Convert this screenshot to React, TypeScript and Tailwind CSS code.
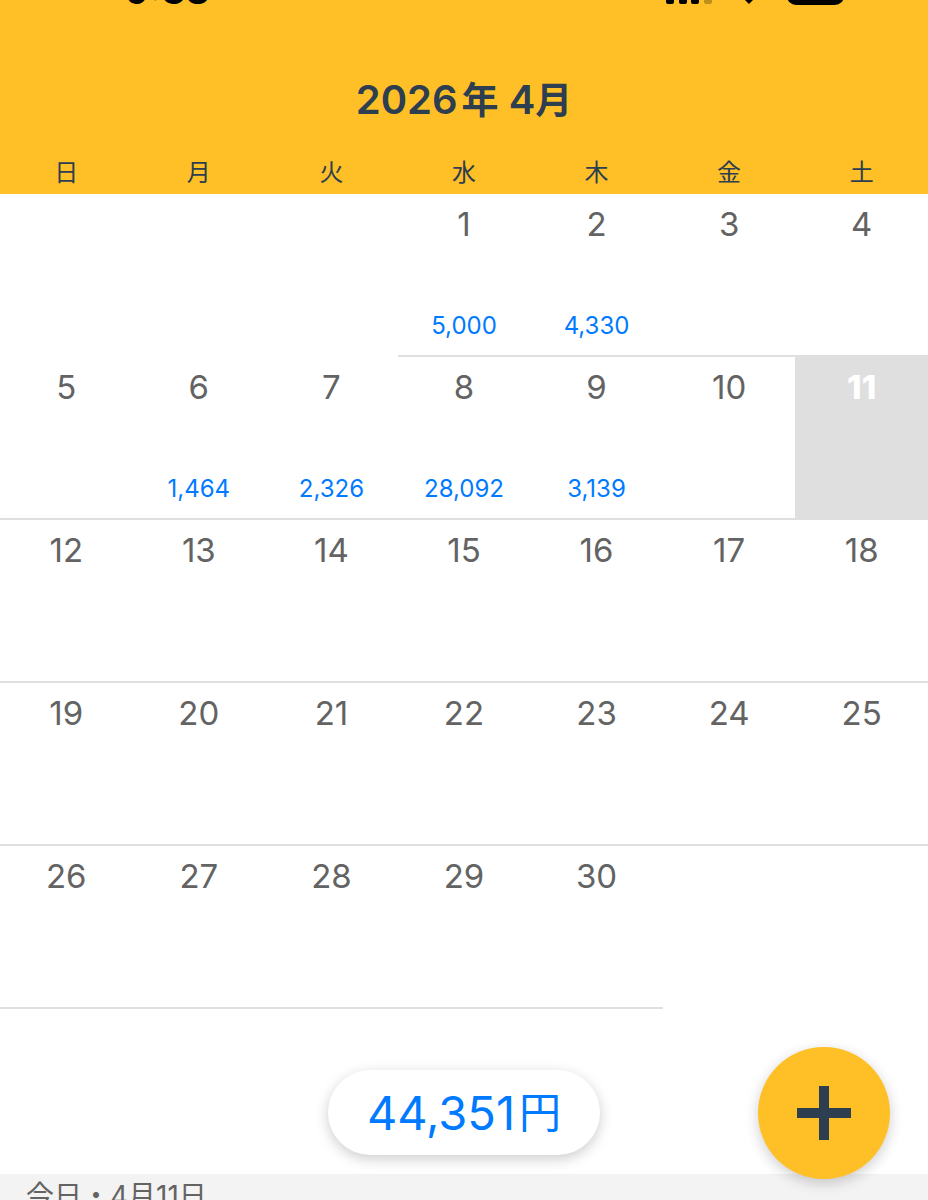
import clsx from 'clsx';

interface Day {
  day: number;
  amount?: string;
}

const TODAY = 11;
const DAYS_IN_MONTH = 30;
const FIRST_WEEKDAY = 3;

const weekdays = ['日', '月', '火', '水', '木', '金', '土'];

const amounts: Record<number, string> = {
  1: '5,000',
  2: '4,330',
  6: '1,464',
  7: '2,326',
  8: '28,092',
  9: '3,139',
};

const weeks: (Day | null)[][] = [0, 1, 2, 3, 4].map((week) =>
  weekdays.map((_, i) => {
    const day = week * 7 + i - FIRST_WEEKDAY + 1;
    return day >= 1 && day <= DAYS_IN_MONTH ? { day, amount: amounts[day] } : null;
  })
);

const StatusBar = () => {
  return (
    <div className="flex h-[6px] items-end justify-between overflow-hidden pl-[125px] pr-[80px] text-black">
      <span className="text-[38px] leading-[32px] font-semibold">9:38</span>
      <svg width="182" height="30" viewBox="0 0 182 30" className="shrink-0">
        <rect x="0" y="19" width="8" height="9" rx="2" />
        <rect x="13" y="14" width="8" height="14" rx="2" />
        <rect x="25" y="9" width="8" height="19" rx="2" />
        <rect x="38" y="3" width="8" height="25" rx="2" opacity="0.25" />
        <path d="M83 28l-6-6q6-5 12 0z" />
        <path d="M66 11q17-15 34 0l-4 4q-13-11-26 0z" />
        <rect x="121" y="1" width="57" height="28" rx="9" />
      </svg>
    </div>
  );
};

const DayCell = ({ data }: { data: Day | null }) => {
  if (!data) return <td></td>;

  const isToday = data.day === TODAY;
  return (
    <td
      className={clsx(
        'border-b-2 border-[#dfdfdf] p-0 align-top',
        isToday && 'bg-[#dfdfdf]'
      )}
    >
      <div className="flex h-[161px] flex-col items-center justify-between pt-[10px] pb-[13px]">
        <span
          className={clsx(
            'text-[33px] leading-[40px]',
            isToday ? 'font-extrabold text-white' : 'text-[#636363]'
          )}
        >
          {data.day}
        </span>
        {data.amount && (
          <span className="text-[24px] leading-[32px] text-[#007aff]">{data.amount}</span>
        )}
      </div>
    </td>
  );
};

const Calendar = () => {
  return (
    <table className="w-full table-fixed border-separate border-spacing-0 text-center">
      <thead className="bg-[#ffbf26] text-[#2c3e50]">
        <tr>
          {weekdays.map((name) => (
            <th key={name} scope="col" className="p-0 pt-[1px] pb-[3px] text-[24px] leading-[36px] font-normal">
              {name}
            </th>
          ))}
        </tr>
      </thead>
      <tbody>
        {weeks.map((week, i) => (
          <tr key={i}>
            {week.map((data, j) => (
              <DayCell key={j} data={data} />
            ))}
          </tr>
        ))}
      </tbody>
    </table>
  );
};

export default function App() {
  return (
    <div
      lang="ja"
      className="flex h-screen flex-col overflow-hidden bg-white font-['Inter','Noto_Sans_CJK_JP',sans-serif]"
    >
      <header className="shrink-0 bg-[#ffbf26] text-[#2c3e50]">
        <StatusBar />
        <h1 className="pt-[68px] pb-[27px] text-center text-[40px] leading-[52px] font-semibold">
          2026<span className="ml-1 text-[37px]">年</span> 4<span className="text-[37px]">月</span>
        </h1>
      </header>

      <main className="shrink-0">
        <Calendar />
        <div className="relative flex justify-center pt-[61px] pb-[19px]">
          <output className="flex h-[85px] items-center rounded-full bg-white px-[39px] text-[47px] leading-[56px] text-[#007aff] shadow-[0_4px_14px_rgba(0,0,0,0.2)]">
            44,351<span className="ml-1 text-[42px]">円</span>
          </output>
          <button
            type="button"
            aria-label="追加"
            className="absolute right-[38px] bottom-[-5px] flex size-[132px] items-center justify-center rounded-full bg-[#ffbf26] shadow-[0_4px_14px_rgba(0,0,0,0.2)]"
          >
            <svg width="54" height="54" viewBox="0 0 54 54" fill="#2c3e50">
              <path d="M22 0h10v22h22v10H32v22H22V32H0V22h22z" />
            </svg>
          </button>
        </div>
      </main>

      <h2 className="shrink-0 bg-[#f3f3f3] px-[26px] py-[2px] text-[28px] leading-[40px] text-[#636363]">
        今日・4月11日
      </h2>
    </div>
  );
}
